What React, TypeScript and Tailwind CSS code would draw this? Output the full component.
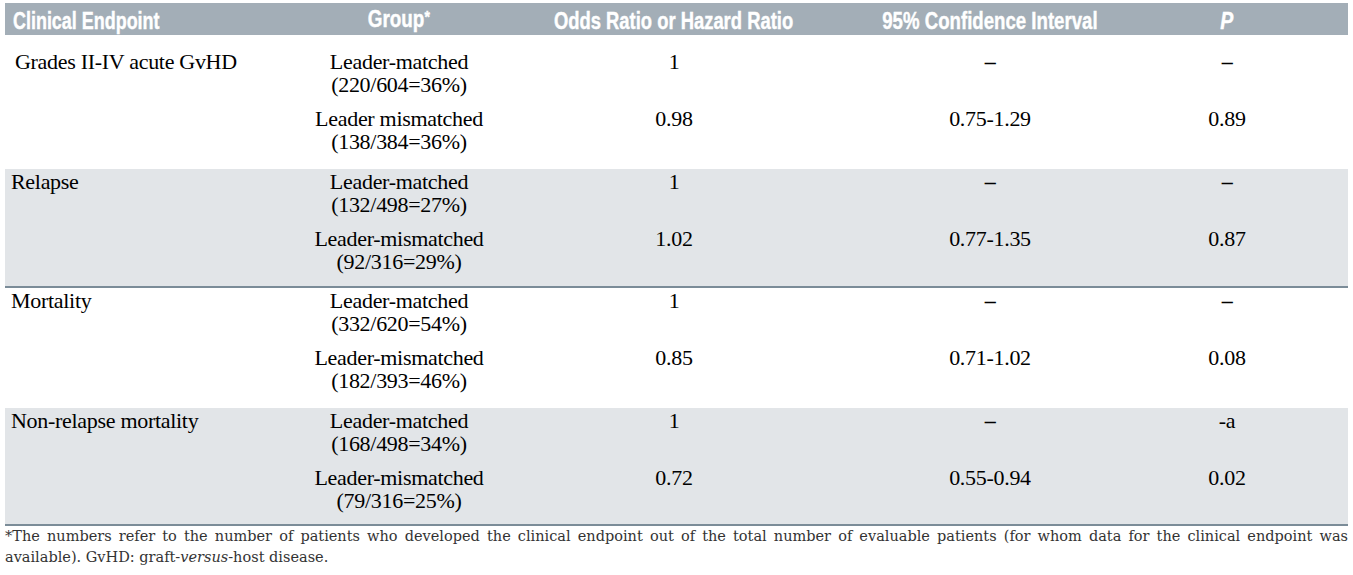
import React from "react";

type Group = [string, string, string, string, string];

type RowProps = {
  name: string;
  nameClass: string;
  rowClass: string;
  groups: Group[];
};

const bodyFont = {
  fontFamily: '"Liberation Serif", "Times New Roman", serif',
};

function Line({ children, dash }: { children?: React.ReactNode; dash?: boolean }) {
  return (
    <div className={`h-[23px] leading-[23px] whitespace-nowrap ${dash ? "font-bold" : ""}`}>{children}</div>
  );
}

function Row({ name, nameClass, rowClass, groups }: RowProps) {
  return (
    <div
      className={`grid grid-cols-[285px_218px_332px_300px_174px] pr-[31px] text-[22px] tracking-[-0.3px] text-black ${rowClass}`}
      style={bodyFont}
    >
      <div className={nameClass}>
        <Line>{name}</Line>
      </div>
      <div className="flex flex-col gap-[11px] text-center">
        {groups.map((g, i) => (
          <div key={i}>
            <Line>{g[0]}</Line>
            <Line>{g[1]}</Line>
          </div>
        ))}
      </div>
      {[2, 3, 4].map((c) => (
        <div key={c} className="flex flex-col gap-[11px] text-center">
          {groups.map((g, i) => (
            <div key={i}>
              <Line dash={g[c] === "–"}>{g[c]}</Line>
              <Line />
            </div>
          ))}
        </div>
      ))}
    </div>
  );
}

export default function App() {
  return (
    <div className="w-[1353px] h-[575px] bg-white pt-[3px] px-[5px] overflow-hidden">
      <div
        className="grid grid-cols-[285px_218px_332px_300px_174px] pr-[31px] h-[32px] items-center bg-[#a3aeb7] text-white font-bold text-[23px] leading-[32px] [-webkit-text-stroke:0.4px_white]"
        style={{ fontFamily: '"Liberation Sans", Arial, sans-serif' }}
      >
        <div className="pl-[8px] whitespace-nowrap">
          <span className="inline-block scale-x-[0.78] origin-left">Clinical Endpoint</span>
        </div>
        <div className="text-center whitespace-nowrap">
          <span className="inline-block scale-x-[0.82] origin-center">
            Group<span className="relative -top-[4px] text-[17px]">*</span>
          </span>
        </div>
        <div className="text-center whitespace-nowrap">
          <span className="inline-block scale-x-[0.8] origin-center">Odds Ratio or Hazard Ratio</span>
        </div>
        <div className="text-center whitespace-nowrap">
          <span className="inline-block scale-x-[0.81] origin-center">95% Confidence Interval</span>
        </div>
        <div className="text-center">
          <span className="inline-block scale-x-[0.85] origin-center italic">P</span>
        </div>
      </div>

      <Row
        name="Grades II-IV acute GvHD"
        nameClass="pl-[10px]"
        rowClass="pt-[15px] pb-[16px]"
        groups={[
          ["Leader-matched", "(220/604=36%)", "1", "–", "–"],
          ["Leader mismatched", "(138/384=36%)", "0.98", "0.75-1.29", "0.89"],
        ]}
      />
      <Row
        name="Relapse"
        nameClass="pl-[6px]"
        rowClass="bg-[#e2e5e8] pt-[1px] pb-[13px] border-b-[2px] border-[#7b8c98]"
        groups={[
          ["Leader-matched", "(132/498=27%)", "1", "–", "–"],
          ["Leader-mismatched", "(92/316=29%)", "1.02", "0.77-1.35", "0.87"],
        ]}
      />
      <Row
        name="Mortality"
        nameClass="pl-[6px]"
        rowClass="pt-[1px] pb-[16px]"
        groups={[
          ["Leader-matched", "(332/620=54%)", "1", "–", "–"],
          ["Leader-mismatched", "(182/393=46%)", "0.85", "0.71-1.02", "0.08"],
        ]}
      />
      <Row
        name="Non-relapse mortality"
        nameClass="pl-[6px]"
        rowClass="bg-[#e2e5e8] pt-[1px] pb-[12px] border-b-[2px] border-[#7b8c98]"
        groups={[
          ["Leader-matched", "(168/498=34%)", "1", "–", "-a"],
          ["Leader-mismatched", "(79/316=25%)", "0.72", "0.55-0.94", "0.02"],
        ]}
      />

      <div
        className="text-[14.5px] leading-[21px] text-[#333333]"
        style={{ fontFamily: '"DejaVu Serif", "Liberation Serif", serif' }}
      >
        <div className="text-justify [text-align-last:justify] whitespace-nowrap">
          *The numbers refer to the number of patients who developed the clinical endpoint out of the total number of
          evaluable patients (for whom data for the clinical endpoint was
        </div>
        <div>
          available). GvHD: graft-<i>versus</i>-host disease.
        </div>
      </div>
    </div>
  );
}
